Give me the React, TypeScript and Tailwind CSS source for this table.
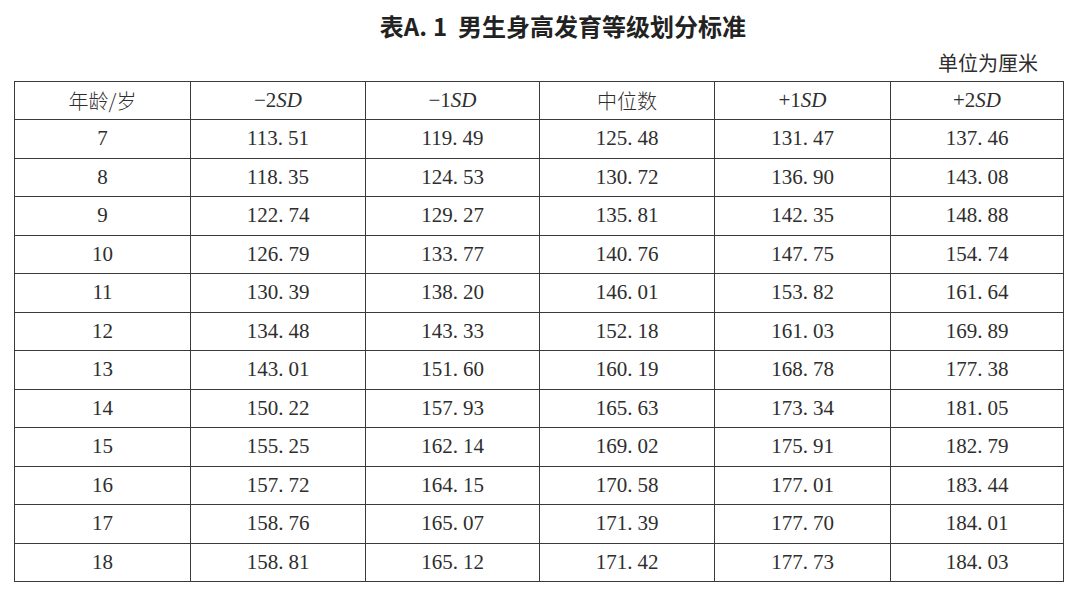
import React from "react"

const rows: [string, string[]][] = [
  ["7", ["113.51", "119.49", "125.48", "131.47", "137.46"]],
  ["8", ["118.35", "124.53", "130.72", "136.90", "143.08"]],
  ["9", ["122.74", "129.27", "135.81", "142.35", "148.88"]],
  ["10", ["126.79", "133.77", "140.76", "147.75", "154.74"]],
  ["11", ["130.39", "138.20", "146.01", "153.82", "161.64"]],
  ["12", ["134.48", "143.33", "152.18", "161.03", "169.89"]],
  ["13", ["143.01", "151.60", "160.19", "168.78", "177.38"]],
  ["14", ["150.22", "157.93", "165.63", "173.34", "181.05"]],
  ["15", ["155.25", "162.14", "169.02", "175.91", "182.79"]],
  ["16", ["157.72", "164.15", "170.58", "177.01", "183.44"]],
  ["17", ["158.76", "165.07", "171.39", "177.70", "184.01"]],
  ["18", ["158.81", "165.12", "171.42", "177.73", "184.03"]],
]

const serif = "font-['Liberation_Serif','Noto_Sans_CJK_SC',serif]"
const cjk = "font-['Noto_Sans_CJK_SC',sans-serif]"
const cell = "border border-[#3a3a3a] p-0 text-center align-middle"

function Num({ value }: { value: string }) {
  const [a, b] = value.split(".")
  return (
    <span>
      {a}
      <span className="mr-[5px]">.</span>
      {b}
    </span>
  )
}

function Sd({ sign }: { sign: string }) {
  return (
    <span className={serif}>
      {sign}
      <span className="italic">SD</span>
    </span>
  )
}

export default function App() {
  return (
    <div className="w-[1080px] h-[592px] bg-white text-[#2e2e2e] overflow-hidden">
      <div className="h-[52px] flex items-center justify-center pl-[46px]">
        <h1 className={`${cjk} text-[24px] font-bold text-[#222]`}>
          表A<span className="mr-[6px]">.</span>1&nbsp;&nbsp;男生身高发育等级划分标准
        </h1>
      </div>
      <div className={`${cjk} h-[22px] flex items-center justify-end pr-[42px] text-[20px] leading-none`}>
        单位为厘米
      </div>
      <table className={`${serif} mt-[7px] ml-[14px] w-[1049px] table-fixed border-collapse border-[1.5px] border-[#333] text-[21px]`}>
        <colgroup>
          <col className="w-[176px]" />
          <col className="w-[175px]" />
          <col className="w-[174px]" />
          <col className="w-[175px]" />
          <col className="w-[176px]" />
          <col className="w-[173px]" />
        </colgroup>
        <thead>
          <tr className="h-[38px]">
            <th className={`${cell} ${cjk} font-light text-[20px]`}>年龄/岁</th>
            <th className={`${cell} font-normal`}><Sd sign="−2" /></th>
            <th className={`${cell} font-normal`}><Sd sign="−1" /></th>
            <th className={`${cell} ${cjk} font-light text-[20px]`}>中位数</th>
            <th className={`${cell} font-normal`}><Sd sign="+1" /></th>
            <th className={`${cell} font-normal`}><Sd sign="+2" /></th>
          </tr>
        </thead>
        <tbody>
          {rows.map(([age, vals]) => (
            <tr key={age} className="h-[38.5px]">
              <td className={cell}>{age}</td>
              {vals.map((v, i) => (
                <td key={i} className={cell}>
                  <Num value={v} />
                </td>
              ))}
            </tr>
          ))}
        </tbody>
      </table>
    </div>
  )
}
